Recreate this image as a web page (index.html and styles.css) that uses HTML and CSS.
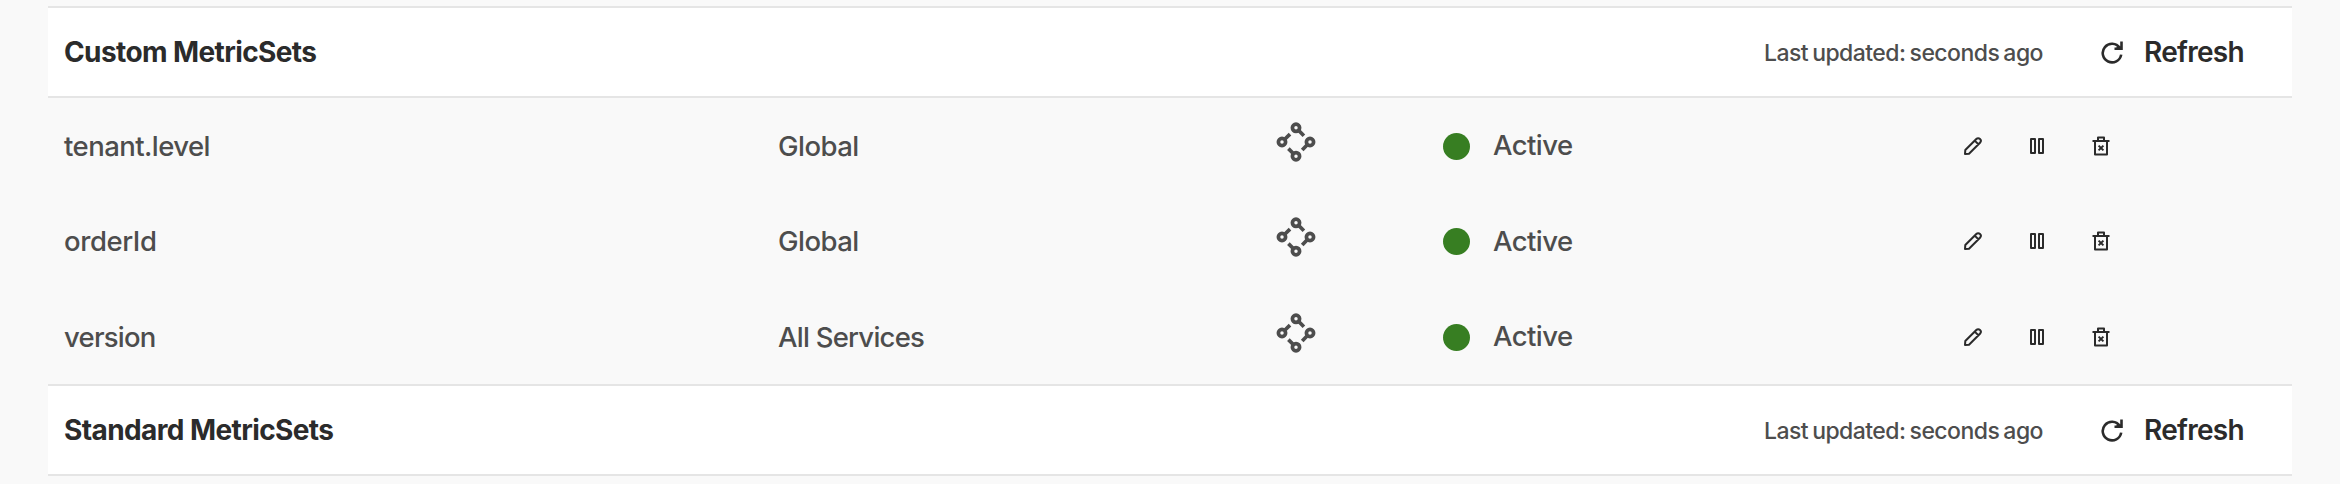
FILE: index.html
```
<!DOCTYPE html>
<html lang="en">
<head>
<meta charset="utf-8">
<title>MetricSets</title>
<link rel="stylesheet" href="styles.css">
</head>
<body>
<svg class="defs" aria-hidden="true">
  <symbol id="refresh" viewBox="0 0 24 24"><path d="M21.2 14.6A9.3 9.3 0 1 1 19.7 7.8M21.5 1.5V8.7H14.5M17 6.2L21 8.6" /></symbol>
  <symbol id="network" viewBox="0 0 40 40"><circle cx="20" cy="5.8" r="3.6"/><circle cx="6" cy="20" r="3.6"/><circle cx="34" cy="20" r="3.6"/><circle cx="20" cy="34.2" r="3.6"/><path d="M22.5 8.3L27.9 13.8M8.5 17.5L14 12.2M17.5 31.7L12.4 26.6M31.5 22.5L26.2 28"/></symbol>
  <symbol id="pencil" viewBox="0 0 20 20"><path d="M2 18L2.3 14L13.3 3A2.6 2.6 0 0 1 17 6.7L6 17.7L2 18ZM11.7 4.6L15.4 8.3"/></symbol>
  <symbol id="pause" viewBox="0 0 20 20"><path d="M4 3H8V17H4ZM12 3H16V17H12Z"/></symbol>
  <symbol id="trash" viewBox="0 0 20 20"><path d="M1.5 5H18.5M4 5V18.5H16V5M7 5V1.5H13V5"/><path d="M7.6 9.6L12.4 14.4M12.4 9.6L7.6 14.4"/></symbol>
</svg>
<main class="metricsets">
  <header class="group">
    <h2 class="group-title">Custom MetricSets</h2>
    <span class="updated">Last updated: seconds ago</span>
    <button class="refresh"><svg class="refresh-icon"><use href="#refresh"/></svg>Refresh</button>
  </header>
  <div class="rows">
    <div class="row">
      <span class="name">tenant.level</span><span class="scope">Global</span>
      <svg class="network"><use href="#network"/></svg>
      <span class="dot"></span><span class="status raised">Active</span>
      <span class="actions"><svg class="icon"><use href="#pencil"/></svg><svg class="icon"><use href="#pause"/></svg><svg class="icon"><use href="#trash"/></svg></span>
    </div>
    <div class="row">
      <span class="name wide">orderId</span><span class="scope">Global</span>
      <svg class="network"><use href="#network"/></svg>
      <span class="dot"></span><span class="status">Active</span>
      <span class="actions"><svg class="icon"><use href="#pencil"/></svg><svg class="icon"><use href="#pause"/></svg><svg class="icon"><use href="#trash"/></svg></span>
    </div>
    <div class="row">
      <span class="name narrow">version</span><span class="scope narrow">All Services</span>
      <svg class="network"><use href="#network"/></svg>
      <span class="dot"></span><span class="status raised">Active</span>
      <span class="actions"><svg class="icon"><use href="#pencil"/></svg><svg class="icon"><use href="#pause"/></svg><svg class="icon"><use href="#trash"/></svg></span>
    </div>
  </div>
  <header class="group">
    <h2 class="group-title">Standard MetricSets</h2>
    <span class="updated">Last updated: seconds ago</span>
    <button class="refresh"><svg class="refresh-icon"><use href="#refresh"/></svg>Refresh</button>
  </header>
</main>
</body>
</html>
```
FILE: styles.css
```
* { box-sizing: border-box; }
body {
  margin: 0;
  height: 484px;
  overflow: hidden;
  background: #f9f9f9;
  color: #4d4d4d;
  font: 500 27.5px/40px Inter, sans-serif;
}
.defs { display: none; }
svg { fill: none; }
.metricsets { padding: 6px 48px 0; }
.group {
  display: flex;
  align-items: center;
  height: 92px;
  padding: 0 48px 0 16px;
  background: #fff;
  border: solid #e5e5e5;
  border-width: 2px 0;
}
.group-title {
  margin: 0 auto 0 0;
  color: #2b2b2b;
  font-size: 28px;
  font-weight: 700;
  letter-spacing: -0.6px;
}
.updated {
  padding-top: 2px;
  margin-right: 57px;
  font-size: 23px;
  letter-spacing: -0.54px;
  word-spacing: -1.5px;
}
.refresh {
  display: flex;
  align-items: center;
  gap: 20px;
  padding: 0;
  border: 0;
  background: none;
  color: #2b2b2b;
  font: 600 28px/40px Inter, sans-serif;
  letter-spacing: -0.7px;
}
.refresh-icon {
  width: 24px;
  height: 24px;
  stroke: #2b2b2b;
  stroke-width: 2.6;
}
.rows {
  display: grid;
  grid-template-rows: 95px 96px 95px;
}
.row {
  display: grid;
  grid-template-columns: 714px 498px 167px 50px 470px 1fr;
  align-items: start;
  padding: 28px 0 0 16px;
}
.name, .scope, .status { letter-spacing: -0.55px; }
.name.wide { letter-spacing: -0.42px; }
.name.narrow, .scope.narrow { letter-spacing: -0.76px; }
.raised { margin-top: -1px; }
.network {
  width: 40px;
  height: 40px;
  margin-top: -4px;
  stroke: #4d4d4d;
  stroke-width: 3.7;
}
.dot {
  width: 27px;
  height: 27px;
  margin-top: 7px;
  border-radius: 50%;
  background: #377e22;
}
.actions {
  display: flex;
  gap: 44px;
  padding-top: 10px;
}
.icon {
  width: 20px;
  height: 20px;
  stroke: #2b2b2b;
  stroke-width: 2;
  stroke-linejoin: round;
}
```
